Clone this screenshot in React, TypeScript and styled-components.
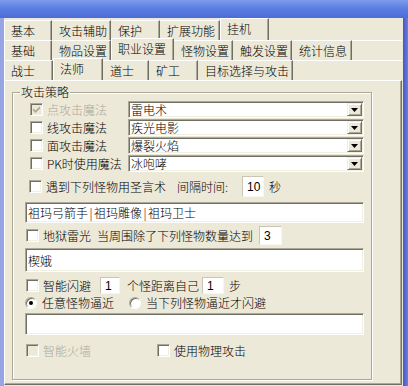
import React from "react";
import styled, { createGlobalStyle } from "styled-components";

const face = "#ECE9D8";
const shadow = "#ACA899";
const darkShadow = "#716F64";
const light = "#F1EFE2";

const GlobalStyle = createGlobalStyle`
  html, body {
    margin: 0;
    padding: 0;
    background: ${face};
  }
  body {
    font-family: "Noto Sans CJK SC", "Noto Sans", sans-serif;
    font-size: 12px;
    font-weight: 300;
    color: #000;
  }
`;

const Window = styled.div`
  width: 408px;
  height: 386px;
  display: flex;
  flex-direction: column;
  overflow: hidden;
  background: ${face};
`;

const TitleBar = styled.div`
  flex: none;
  height: 18px;
  background: linear-gradient(to bottom, #7e9cec 0%, #5c7fe2 45%, #4b6cd9 100%);
`;

const Body = styled.div`
  flex: 1;
  display: flex;
  min-height: 0;
`;

const LeftEdge = styled.div`
  flex: none;
  width: 4px;
  background: #97a5e4;
`;

const RightEdge = styled.div`
  flex: none;
  width: 5px;
  background: linear-gradient(to right, #4458c9, #6a7ddf);
`;

const Main = styled.div`
  flex: 1;
  display: flex;
  flex-direction: column;
  padding: 2px 1px 1px 0;
`;

const TabRow = styled.div<{ $line?: boolean }>`
  flex: none;
  height: 20px;
  display: flex;
  background: ${({ $line }) =>
    $line ? "linear-gradient(#fff, #fff) top left / 100% 1px no-repeat" : "none"};
`;

const Tab = styled.div<{ $w: number; $active?: boolean }>`
  box-sizing: border-box;
  width: ${({ $w }) => $w}px;
  height: ${({ $active }) => ($active ? 22 : 20)}px;
  margin-top: ${({ $active }) => ($active ? -2 : 0)}px;
  padding: 0 0 ${({ $active }) => ($active ? 2 : 0)}px 6px;
  display: flex;
  align-items: center;
  white-space: nowrap;
  line-height: 14px;
  background: ${face};
  border-top: 1px solid #fff;
  border-left: 1px solid ${({ $active }) => ($active ? "#fff" : "transparent")};
  border-right: 1px solid ${darkShadow};
  box-shadow: inset -1px 0 ${shadow};
  position: relative;
  z-index: ${({ $active }) => ($active ? 1 : 0)};

  &:first-child {
    border-left-color: #fff;
  }
`;

const Page = styled.div`
  flex: 1;
  display: flex;
  flex-direction: column;
  align-items: flex-start;
  border-top: 1px solid #fff;
  border-left: 1px solid #fff;
  border-right: 1px solid ${darkShadow};
  border-bottom: 1px solid ${darkShadow};
  box-shadow: inset -1px -1px ${shadow};
`;

const Group = styled.fieldset`
  box-sizing: border-box;
  width: 360px;
  margin: 4px 0 0 7px;
  padding: 2px 7px 22px 7px;
  border: 1px solid ${shadow};
  box-shadow: inset 1px 1px #fff, 1px 1px #fff;
  display: flex;
  flex-direction: column;
`;

const Legend = styled.legend`
  padding: 0 1px;
  line-height: 14px;
  font-size: 12px;
  background: ${face};
`;

const Row = styled.div<{ $h: number; $mt?: number }>`
  display: flex;
  align-items: center;
  height: ${({ $h }) => $h}px;
  margin-top: ${({ $mt }) => $mt ?? 0}px;
  white-space: nowrap;
  line-height: 14px;
`;

const Check = styled.label<{ $ml?: number; $disabled?: boolean }>`
  display: flex;
  align-items: center;
  gap: 4px;
  margin-left: ${({ $ml }) => $ml ?? 6}px;
  color: ${({ $disabled }) => ($disabled ? shadow : "#000")};
`;

const Box = styled.span<{ $disabled?: boolean }>`
  box-sizing: border-box;
  flex: none;
  width: 13px;
  height: 13px;
  border: 1px solid;
  border-color: ${shadow} #fff #fff ${shadow};
  box-shadow: inset 1px 1px ${darkShadow}, inset -1px -1px ${light};
  background: ${({ $disabled }) => ($disabled ? face : "#fff")};
  display: flex;
  align-items: center;
  justify-content: center;
`;

const Radio = styled.label<{ $ml?: number }>`
  display: flex;
  align-items: center;
  gap: 5px;
  margin-left: ${({ $ml }) => $ml ?? 5}px;
`;

const RadioDot = styled.span<{ $on?: boolean }>`
  box-sizing: border-box;
  flex: none;
  width: 12px;
  height: 12px;
  border-radius: 50%;
  border: 1px solid;
  border-color: ${shadow} #fff #fff ${shadow};
  box-shadow: inset 1px 1px ${darkShadow};
  background: #fff;
  display: flex;
  align-items: center;
  justify-content: center;

  &::after {
    content: "";
    display: ${({ $on }) => ($on ? "block" : "none")};
    width: 4px;
    height: 4px;
    border-radius: 50%;
    background: #000;
  }
`;

const Text = styled.span<{ $ml?: number }>`
  margin-left: ${({ $ml }) => $ml ?? 0}px;
`;

const Combo = styled.div`
  box-sizing: border-box;
  margin-left: auto;
  width: 236px;
  height: 17px;
  padding: 2px;
  display: flex;
  align-items: center;
  background: #fff;
  border: 1px solid;
  border-color: ${shadow} #fff #fff ${shadow};
  box-shadow: inset 1px 1px ${darkShadow}, inset -1px -1px ${light};
`;

const ComboText = styled.span`
  flex: 1;
  line-height: 13px;
`;

const DropButton = styled.span`
  box-sizing: border-box;
  flex: none;
  width: 15px;
  height: 13px;
  margin-right: -1px;
  display: flex;
  align-items: center;
  justify-content: center;
  background: ${face};
  border: 1px solid;
  border-color: ${light} ${darkShadow} ${darkShadow} ${light};
  box-shadow: inset 1px 1px #fff, inset -1px -1px ${shadow};
`;

const TextField = styled.div<{ $h: number; $mt: number }>`
  box-sizing: border-box;
  height: ${({ $h }) => $h}px;
  margin: ${({ $mt }) => $mt}px 0 0 5px;
  padding-left: 2px;
  display: flex;
  align-items: center;
  background: #fff;
  border: 1px solid;
  border-color: ${shadow} #fff #fff ${shadow};
  box-shadow: inset 1px 1px ${darkShadow}, inset -1px -1px ${light};
  white-space: nowrap;
`;

const Bar = styled.span`
  display: inline-block;
  width: 6px;
  text-align: center;
`;

const NumBox = styled.div<{ $w: number; $h: number; $ml: number }>`
  box-sizing: border-box;
  width: ${({ $w }) => $w}px;
  height: ${({ $h }) => $h}px;
  margin-left: ${({ $ml }) => $ml}px;
  padding-left: 4px;
  display: flex;
  align-items: center;
  background: #fff;
  border: 1px solid;
  border-color: #c9c6b8 #f7f6f0 #f7f6f0 #c9c6b8;
  font-family: "Liberation Sans", Arial, sans-serif;
  font-size: 12px;
  font-weight: 400;
`;

const CheckMark = ({ color }: { color: string }) => (
  <svg width="7" height="7" viewBox="0 0 7 7">
    <path d="M0 2.2 L2.5 4.6 L7 0.2 L7 2.6 L2.5 7 L0 4.6 Z" fill={color} />
  </svg>
);

const Arrow = () => (
  <svg width="7" height="4" viewBox="0 0 7 4">
    <polygon points="0,0 7,0 3.5,4" fill="#000" />
  </svg>
);

type CheckProps = {
  label: React.ReactNode;
  ml?: number;
  checked?: boolean;
  disabled?: boolean;
};

const CheckBox: React.FC<CheckProps> = ({ label, ml, checked, disabled }) => (
  <Check $ml={ml} $disabled={disabled}>
    <Box $disabled={disabled}>
      {checked && <CheckMark color={disabled ? shadow : "#000"} />}
    </Box>
    {label}
  </Check>
);

const rows1 = [
  { t: "基本", w: 48 },
  { t: "攻击辅助", w: 59 },
  { t: "保护", w: 49 },
  { t: "扩展功能", w: 60 },
  { t: "挂机", w: 49, on: true },
];
const rows2 = [
  { t: "基础", w: 48 },
  { t: "物品设置", w: 59 },
  { t: "职业设置", w: 63, on: true },
  { t: "怪物设置", w: 59 },
  { t: "触发设置", w: 59 },
  { t: "统计信息", w: 60 },
];
const rows3 = [
  { t: "战士", w: 49 },
  { t: "法师", w: 50, on: true },
  { t: "道士", w: 46 },
  { t: "矿工", w: 49 },
  { t: "目标选择与攻击", w: 95 },
];

const spells = [
  { label: "点攻击魔法", value: "雷电术", checked: true, disabled: true },
  { label: "线攻击魔法", value: "疾光电影" },
  { label: "面攻击魔法", value: "爆裂火焰" },
  { label: "PK时使用魔法", value: "冰咆哮" },
];

const App: React.FC = () => (
  <Window>
    <GlobalStyle />
    <TitleBar />
    <Body>
      <LeftEdge />
      <Main>
        <TabRow>
          {rows1.map(r => (
            <Tab key={r.t} $w={r.w} $active={r.on}>{r.t}</Tab>
          ))}
        </TabRow>
        <TabRow $line>
          {rows2.map(r => (
            <Tab key={r.t} $w={r.w} $active={r.on}>{r.t}</Tab>
          ))}
        </TabRow>
        <TabRow $line>
          {rows3.map(r => (
            <Tab key={r.t} $w={r.w} $active={r.on}>{r.t}</Tab>
          ))}
        </TabRow>
        <Page>
          <Group>
            <Legend>攻击策略</Legend>
            {spells.map((s, i) => (
              <Row key={s.label} $h={17} $mt={i === 0 ? 0 : 1}>
                <CheckBox label={s.label} ml={10} checked={s.checked} disabled={s.disabled} />
                <Combo>
                  <ComboText>{s.value}</ComboText>
                  <DropButton>
                    <Arrow />
                  </DropButton>
                </Combo>
              </Row>
            ))}

            <Row $h={21} $mt={4}>
              <CheckBox label="遇到下列怪物用圣言术" ml={9} />
              <Text $ml={11}>间隔时间:</Text>
              <NumBox $w={22} $h={21} $ml={14}>10</NumBox>
              <Text $ml={5}>秒</Text>
            </Row>
            <TextField $h={21} $mt={5}>
              祖玛弓箭手<Bar>|</Bar>祖玛雕像<Bar>|</Bar>祖玛卫士
            </TextField>

            <Row $h={19} $mt={3}>
              <CheckBox label="地狱雷光" ml={6} />
              <Text $ml={6}>当周围除了下列怪物数量达到</Text>
              <NumBox $w={23} $h={19} $ml={6}>3</NumBox>
            </Row>
            <TextField $h={24} $mt={3}>楔娥</TextField>

            <Row $h={17} $mt={5}>
              <CheckBox label="智能闪避" ml={6} />
              <NumBox $w={20} $h={17} $ml={9}>1</NumBox>
              <Text $ml={7}>个怪距离自己</Text>
              <NumBox $w={22} $h={17} $ml={3}>1</NumBox>
              <Text $ml={5}>步</Text>
            </Row>
            <Row $h={14} $mt={2}>
              <Radio $ml={5}>
                <RadioDot $on />
                任意怪物逼近
              </Radio>
              <Radio $ml={15}>
                <RadioDot />
                当下列怪物逼近才闪避
              </Radio>
            </Row>
            <TextField $h={22} $mt={3} />

            <Row $h={13} $mt={9}>
              <CheckBox label="智能火墙" ml={6} disabled />
              <CheckBox label="使用物理攻击" ml={66} />
            </Row>
          </Group>
        </Page>
      </Main>
      <RightEdge />
    </Body>
  </Window>
);

export default App;
